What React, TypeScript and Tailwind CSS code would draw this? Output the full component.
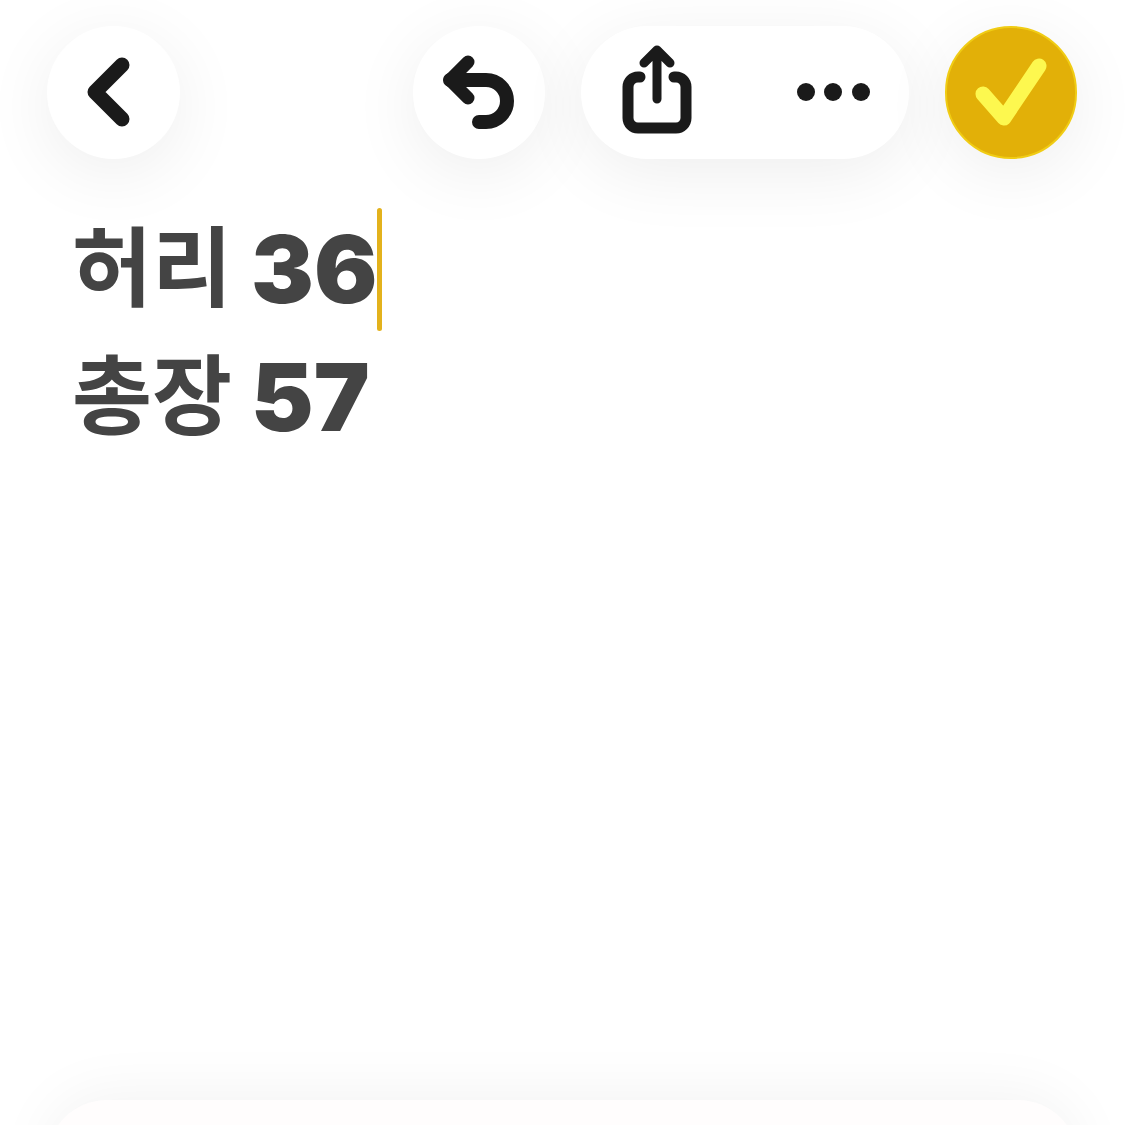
const softShadow = "shadow-[0_14px_70px_rgba(0,0,0,0.07)]";
const circleButton = `rounded-full bg-white shrink-0 ${softShadow}`;

const Header = () => (
  <div className="flex items-center justify-between pl-[47px] pr-[48px] pt-[26px]">
    <div className={`w-[133px] h-[133px] ${circleButton}`}>
      <svg viewBox="0 0 133 133" className="w-full h-full" fill="none" stroke="#1a1a1a" strokeWidth="15" strokeLinecap="round" strokeLinejoin="round">
        <path d="M75 39 L48 66 L75 93" />
      </svg>
    </div>
    <div className="flex items-center gap-[36px]">
      <div className={`w-[132px] h-[133px] ${circleButton}`}>
        <svg viewBox="0 0 132 133" className="w-full h-full" fill="none" stroke="#1a1a1a" strokeLinecap="round" strokeLinejoin="round">
          <path d="M55 36 L37 54 L55 72" strokeWidth="13" />
          <path d="M37 54 H73 A21 21 0 0 1 73 96 H66" strokeWidth="14" />
        </svg>
      </div>
      <div className={`w-[328px] h-[133px] rounded-full bg-white ${softShadow}`}>
        <svg viewBox="0 0 328 133" className="w-full h-full" fill="none" stroke="#1a1a1a" strokeLinecap="round" strokeLinejoin="round">
          <path d="M59 51 H57 A10 10 0 0 0 47 61 V92 A10 10 0 0 0 57 102 H95 A10 10 0 0 0 105 92 V61 A10 10 0 0 0 95 51 H93" strokeWidth="11" />
          <path d="M76 73 V25 M63 37 L76 24 L89 37" strokeWidth="9" />
          <circle cx="225" cy="66" r="9" fill="#1a1a1a" stroke="none" />
          <circle cx="252" cy="66" r="9" fill="#1a1a1a" stroke="none" />
          <circle cx="280" cy="66" r="9" fill="#1a1a1a" stroke="none" />
        </svg>
      </div>
      <div className={`w-[132px] h-[133px] rounded-full bg-[#e2b008] border-2 border-[#f0cc14] shrink-0 ${softShadow}`}>
        <svg viewBox="0 0 128 129" className="w-full h-full" fill="none" stroke="#fdf84f" strokeWidth="15" strokeLinecap="round" strokeLinejoin="round">
          <path d="M36 66 L57 90 L92 38" />
        </svg>
      </div>
    </div>
  </div>
);

const Line = ({ label, value, caret }: { label: string; value: string; caret?: boolean }) => (
  <div className="h-[128px] flex items-center whitespace-nowrap text-[#444444]">
    <span className="mb-[13px] text-[87px] font-bold leading-none font-['Noto_Sans_CJK_KR',sans-serif]">{label}</span>
    <span className="ml-[19px] text-[94px] font-black leading-none font-['Inter',sans-serif]">{value}</span>
    {caret && <span className="w-[5px] h-[123px] rounded-full bg-[#e3b21c]" />}
  </div>
);

export default function App() {
  return (
    <div className="w-[1125px] h-[1125px] overflow-hidden bg-white flex flex-col">
      <Header />
      <div className="pl-[72px] pt-[46px] flex-1">
        <Line label="허리" value="36" caret />
        <Line label="총장" value="57" />
      </div>
      <div className="mx-[47px] h-[25px] shrink-0">
        <div className="h-[200px] rounded-[60px] bg-[#fffdfd] shadow-[0_-6px_60px_rgba(0,0,0,0.05)]" />
      </div>
    </div>
  );
}
